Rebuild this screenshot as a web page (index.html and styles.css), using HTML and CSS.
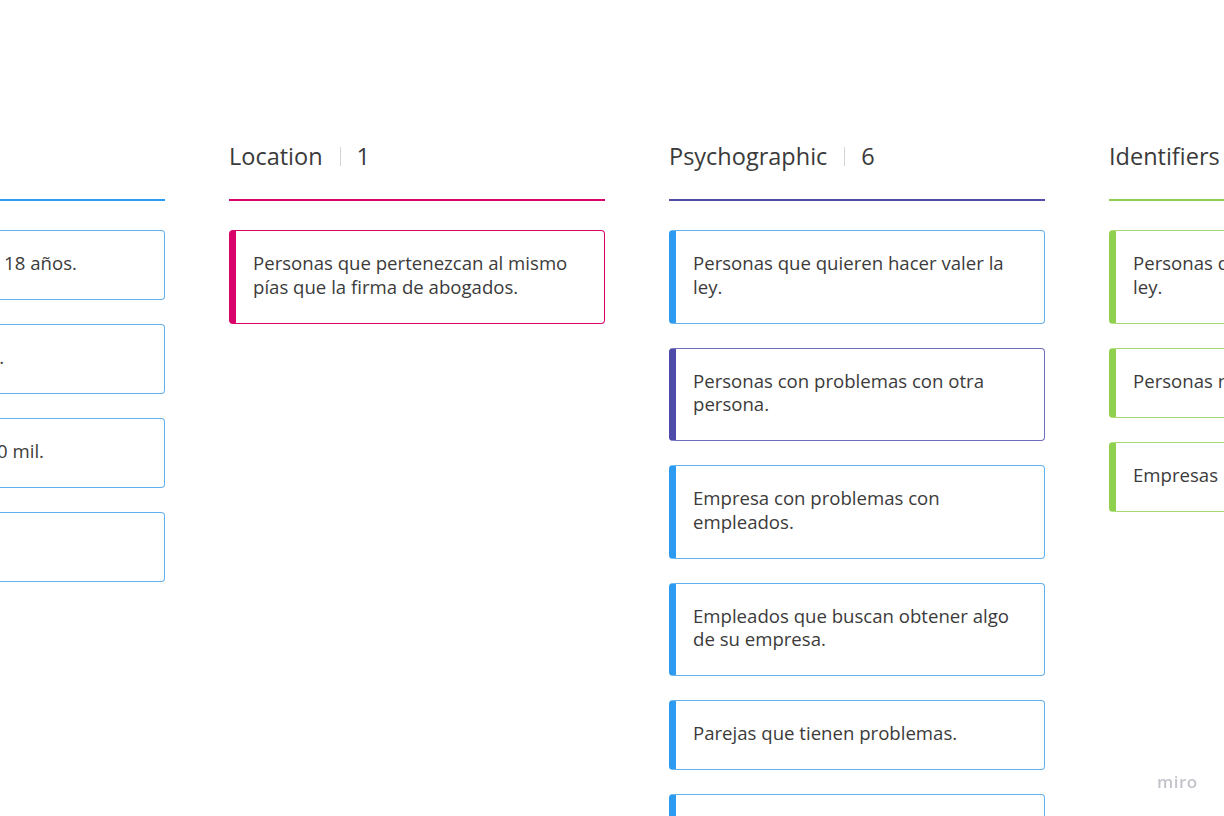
FILE: index.html
```html
<!DOCTYPE html>
<html lang="es">
<head>
<meta charset="utf-8">
<title>Board</title>
<link rel="stylesheet" href="styles.css">
</head>
<body>
<div class="board">
  <section class="column col-blue">
    <header class="col-head"><span class="col-title">Demographic</span><span class="sep"></span><span class="col-count">4</span></header>
    <div class="cards">
      <div class="card c-blue"><p>Personas mayores de 18 años.</p></div>
      <div class="card c-blue"><p>Personas con empleo.</p></div>
      <div class="card c-blue"><p>Ingresos mayores a 10 mil.</p></div>
      <div class="card c-blue"><p>&nbsp;</p></div>
    </div>
  </section>
  <section class="column col-pink">
    <header class="col-head"><span class="col-title">Location</span><span class="sep"></span><span class="col-count">1</span></header>
    <div class="cards">
      <div class="card c-pink"><p>Personas que pertenezcan al mismo pías que la firma de abogados.</p></div>
    </div>
  </section>
  <section class="column col-purple">
    <header class="col-head"><span class="col-title">Psychographic</span><span class="sep"></span><span class="col-count">6</span></header>
    <div class="cards">
      <div class="card c-blue"><p>Personas que quieren hacer valer la ley.</p></div>
      <div class="card c-purple"><p>Personas con problemas con otra persona.</p></div>
      <div class="card c-blue"><p>Empresa con problemas con empleados.</p></div>
      <div class="card c-blue"><p>Empleados que buscan obtener algo de su empresa.</p></div>
      <div class="card c-blue"><p>Parejas que tienen problemas.</p></div>
      <div class="card c-blue"><p>Personas que necesitan asesoría legal.</p></div>
    </div>
  </section>
  <section class="column col-green">
    <header class="col-head"><span class="col-title">Identifiers</span><span class="sep"></span><span class="col-count">3</span></header>
    <div class="cards">
      <div class="card c-green"><p>Personas que quieren hacer valer la ley.</p></div>
      <div class="card c-green"><p>Personas necesitadas de ayuda.</p></div>
      <div class="card c-green"><p>Empresas  con problemas.</p></div>
    </div>
  </section>
</div>
<div class="brand">miro</div>
</body>
</html>
```
FILE: styles.css
```css
html, body {
  margin: 0;
  padding: 0;
  background: #ffffff;
  overflow: hidden;
  height: 816px;
}
body {
  font-family: "Open Sans", "Noto Sans", sans-serif;
  color: #3b3b3b;
}
.board {
  display: flex;
  gap: 64px;
  margin-left: -211px;
  padding-top: 141px;
}
.column {
  flex: 0 0 376px;
  width: 376px;
}
.col-head {
  display: flex;
  align-items: center;
  height: 30px;
  font-size: 23.5px;
  line-height: 30px;
  color: #3a3a3a;
  padding-bottom: 28px;
  border-bottom: 2px solid #2d9bf0;
  white-space: nowrap;
}
.col-pink .col-head { border-bottom-color: #d9046a; }
.col-purple .col-head { border-bottom-color: #4e4aa8; }
.col-green .col-head { border-bottom-color: #8fd14f; }
.sep {
  display: inline-block;
  width: 1px;
  height: 19px;
  background: #d6d6d6;
  margin: 0 16px 0 17px;
}
.cards {
  display: flex;
  flex-direction: column;
  gap: 24px;
  padding-top: 29px;
}
.card {
  box-sizing: border-box;
  border: 1px solid #2d9bf0;
  border-left-width: 7px;
  border-radius: 4px;
  padding: 20px 21px 24.5px 17px;
  background: #fff;
}
.card p {
  margin: 0;
  font-size: 18.6px;
  line-height: 23.5px;
  color: #3b3b3b;
  white-space: pre-wrap;
}
.c-blue { border-color: #2d9bf0; border-top-color: #62b1ee; border-right-color: #62b1ee; border-bottom-color: #62b1ee; }
.c-pink { border-color: #d9046a; }
.c-purple { border-color: #4e4aa8; border-top-color: #6f6cba; border-right-color: #6f6cba; border-bottom-color: #6f6cba; }
.c-green { border-color: #8fd14f; border-top-color: #a6da72; border-right-color: #a6da72; border-bottom-color: #a6da72; }
.brand {
  position: fixed;
  left: 1157px;
  top: 770px;
  font-family: "Open Sans", sans-serif;
  font-size: 17px;
  font-weight: 600;
  letter-spacing: 0.5px;
  color: #c4c4cc;
}
```
